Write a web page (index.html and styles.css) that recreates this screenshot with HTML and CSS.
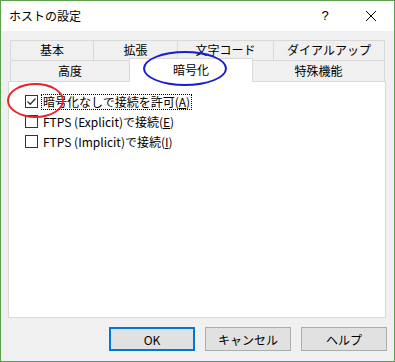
FILE: index.html
```html
<!DOCTYPE html>
<html lang="ja">
<head>
    <meta charset="UTF-8">
    <title>ホストの設定</title>
    <link rel="stylesheet" href="styles.css">
</head>
<body>
    <div class="window">
        <div class="titlebar">
            <span class="title">ホストの設定</span>
            <span class="help-btn">?</span>
            <span class="close-btn">
                <svg width="12" height="12" viewBox="0 0 12 12"><path d="M1 1L11 11M11 1L1 11" stroke="#000" stroke-width="1"/></svg>
            </span>
        </div>

        <div class="content">
            <div class="tabs">
                <div class="tab-row">
                    <div class="tab w83">基本</div>
                    <div class="tab w84">拡張</div>
                    <div class="tab w96">文字コード</div>
                    <div class="tab grow">ダイアルアップ</div>
                </div>
                <div class="tab-row">
                    <div class="tab w119">高度</div>
                    <div class="tab active w123">暗号化</div>
                    <div class="tab grow">特殊機能</div>
                </div>
            </div>

            <div class="panel">
                <label class="check-row">
                    <span class="box checked">
                        <svg width="11" height="11" viewBox="0 0 11 11"><path d="M1.5 5.5L4.2 8.2L9.5 2.5" fill="none" stroke="#333" stroke-width="1.3"/></svg>
                    </span>
                    <span class="label focus">暗号化なしで接続を許可(<u>A</u>)</span>
                </label>
                <label class="check-row">
                    <span class="box"></span>
                    <span class="label">FTPS (Explicit)で接続(<u>E</u>)</span>
                </label>
                <label class="check-row">
                    <span class="box"></span>
                    <span class="label">FTPS (Implicit)で接続(<u>I</u>)</span>
                </label>
            </div>

            <div class="buttons">
                <button class="btn default">OK</button>
                <button class="btn">キャンセル</button>
                <button class="btn">ヘルプ</button>
            </div>
        </div>

        <!-- annotations drawn over the dialog -->
        <div class="mark red"></div>
        <div class="mark blue"></div>
    </div>
</body>
</html>
```

FILE: styles.css
```css
body {
    margin: 0;
    background-color: #ffffff;
    font-family: "Noto Sans CJK JP", "Noto Sans", sans-serif;
    font-size: 12px;
    color: #000;
}

.window {
    position: relative;
    width: 395px;
    height: 362px;
    box-sizing: border-box;
    border: 1px solid #5ba04b;
    display: flex;
    flex-direction: column;
    background-color: #f0f0f0;
    overflow: hidden;
}

.titlebar {
    height: 30px;
    background-color: #fff;
    display: flex;
    align-items: center;
    padding-left: 8px;
    line-height: 14px;
}

.title {
    flex: 1;
}

.help-btn {
    width: 20px;
    margin-right: 30px;
    text-align: center;
    font-family: "Liberation Sans", sans-serif;
    font-size: 13px;
}

.close-btn {
    width: 14px;
    margin-right: 15px;
    display: flex;
    align-items: center;
}

.content {
    flex: 1;
    padding: 9px 8px 0 7px;
    display: flex;
    flex-direction: column;
}

.tabs {
    margin: 0 1px 0 2px;
}

.tab-row {
    display: flex;
    height: 20px;
}

.tab-row + .tab-row {
    height: 21px;
}

.tab {
    box-sizing: border-box;
    border: 1px solid #d9d9d9;
    border-bottom: none;
    margin-left: -1px;
    text-align: center;
    line-height: 18px;
    background-color: #f0f0f0;
}

.tab:first-child {
    margin-left: 0;
}

.tab-row + .tab-row .tab {
    line-height: 20px;
}

.tab.active {
    position: relative;
    z-index: 2;
    background-color: #fff;
    margin-top: -2px;
    height: 24px;
    line-height: 20px;
    padding-top: 1px;
}

.w83 { width: 84px; }
.w84 { width: 85px; }
.w96 { width: 97px; }
.w119 { width: 120px; }
.w123 { width: 124px; }
.grow { flex: 1; }

.panel {
    position: relative;
    z-index: 1;
    height: 237px;
    box-sizing: border-box;
    background-color: #fff;
    border: 1px solid #d9d9d9;
    padding: 13px 0 0 16px;
    display: flex;
    flex-direction: column;
    gap: 7px;
}

.check-row {
    display: flex;
    align-items: center;
    height: 13px;
    gap: 3px;
}

.box {
    width: 13px;
    height: 13px;
    box-sizing: border-box;
    border: 1px solid #333;
    background-color: #fff;
    display: flex;
    align-items: center;
    justify-content: center;
}

.label {
    line-height: 14px;
    padding: 0 1px;
    border: 1px dotted transparent;
}

.label.focus {
    border-color: #000;
}

.label u {
    text-underline-offset: 1px;
}

.buttons {
    display: flex;
    justify-content: flex-end;
    gap: 10px;
    margin-top: 9px;
    margin-right: -1px;
}

.btn {
    width: 86px;
    height: 24px;
    box-sizing: border-box;
    border: 1px solid #adadad;
    background-color: #e1e1e1;
    font-family: "Noto Sans CJK JP", sans-serif;
    font-size: 12px;
    padding: 0;
    color: #000;
}

.btn.default {
    border: 2px solid #0078d7;
}

.mark {
    position: absolute;
    z-index: 5;
    border-radius: 50%;
    box-sizing: border-box;
}

.red {
    left: 6px;
    top: 82px;
    width: 57px;
    height: 35px;
    border: 2px solid #e5262b;
}

.blue {
    left: 142px;
    top: 50px;
    width: 84px;
    height: 35px;
    border: 2.5px solid #1c1cd0;
}
```
